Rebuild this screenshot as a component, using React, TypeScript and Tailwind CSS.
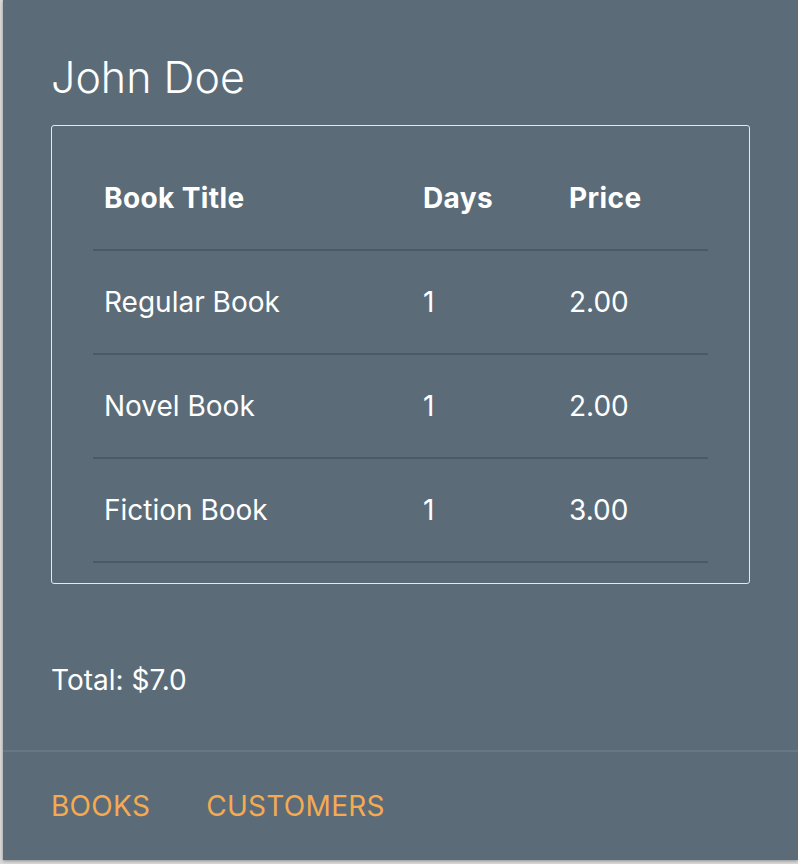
import React from 'react';

const rentals = [
  { title: 'Regular Book', days: 1, price: '2.00' },
  { title: 'Novel Book', days: 1, price: '2.00' },
  { title: 'Fiction Book', days: 1, price: '3.00' },
];

const App = () => {
  return (
    <div className="min-h-[864px] bg-[#d9d9d9] pl-[3px] font-['Inter',sans-serif]">
      <div className="bg-[#5b6c78] h-[860px] flex flex-col shadow-[0_1px_3px_rgba(0,0,0,0.35)]">
        <div className="px-12 pt-[52px] flex-1">
          <h1 className="text-[43px] leading-[50px] font-light text-white">John Doe</h1>
          <div className="mt-[23px] border-[1.5px] border-[#e6e8ea] rounded-[3px] px-[41px] py-[20px]">
            <table className="w-full text-white text-[28px] border-collapse">
              <thead>
                <tr className="h-[104px] border-b-2 border-[#4b5a65]">
                  <th className="w-[319px] px-[11px] text-left font-bold tracking-[0.4px]">Book Title</th>
                  <th className="w-[146px] px-[11px] text-left font-bold tracking-[0.4px]">Days</th>
                  <th className="px-[11px] text-left font-bold tracking-[0.4px]">Price</th>
                </tr>
              </thead>
              <tbody>
                {rentals.map((r) => (
                  <tr key={r.title} className="h-[104px] border-b-2 border-[#4b5a65]">
                    <td className="px-[11px]">{r.title}</td>
                    <td className="px-[11px]">{r.days}</td>
                    <td className="px-[11px]">{r.price}</td>
                  </tr>
                ))}
              </tbody>
            </table>
          </div>
          <p className="mt-[80px] text-[28px] leading-[32px] text-white">Total: $7.0</p>
        </div>
        <div className="h-[110px] border-t-2 border-[#677884] px-12 flex items-center gap-[56px] text-[28px] text-[#f5aa52] uppercase tracking-[0.3px]">
          <a href="#">Books</a>
          <a href="#">Customers</a>
        </div>
      </div>
    </div>
  );
};

export default App;
